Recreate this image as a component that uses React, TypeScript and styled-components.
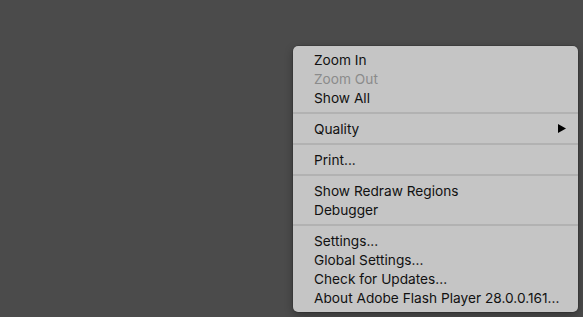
import React from "react";
import styled, { createGlobalStyle } from "styled-components";

const Global = createGlobalStyle`
  html, body { margin: 0; padding: 0; background: #4b4b4b; }
  body { width: 583px; height: 317px; overflow: hidden; }
`;

const Page = styled.div`
  width: 583px;
  height: 317px;
  box-sizing: border-box;
  padding: 46px 0 0 293px;
  background: #4b4b4b;
`;

const Menu = styled.div`
  width: 285px;
  box-sizing: border-box;
  padding: 4px 0 5px;
  background: #c5c5c5;
  border-radius: 5px;
  box-shadow: 0 0 0 0.5px rgba(0, 0, 0, 0.25), 0 3px 8px rgba(0, 0, 0, 0.3);
  display: flex;
  flex-direction: column;
  font-family: "Inter", "Liberation Sans", sans-serif;
  font-size: 13.7px;
`;

const Item = styled.div<{ $disabled?: boolean }>`
  height: 19px;
  display: flex;
  align-items: center;
  justify-content: space-between;
  padding: 0 12px 0 21px;
  color: ${(p) => (p.$disabled ? "#8b8b8b" : "#111111")};
  white-space: nowrap;
`;

const Separator = styled.div`
  height: 12px;
  display: flex;
  align-items: center;
  &::after {
    content: "";
    flex: 1;
    height: 2px;
    background: #b2b2b2;
  }
`;

const Arrow = styled.svg`
  width: 8px;
  height: 9px;
  display: block;
`;

export default function App() {
  return (
    <>
      <Global />
      <Page>
        <Menu>
          <Item>Zoom In</Item>
          <Item $disabled>Zoom Out</Item>
          <Item>Show All</Item>
          <Separator />
          <Item>
            <span>Quality</span>
            <Arrow viewBox="0 0 8 9">
              <path d="M0 0 L8 4.5 L0 9 Z" fill="#000" />
            </Arrow>
          </Item>
          <Separator />
          <Item>Print...</Item>
          <Separator />
          <Item>Show Redraw Regions</Item>
          <Item>Debugger</Item>
          <Separator />
          <Item>Settings...</Item>
          <Item>Global Settings...</Item>
          <Item>Check for Updates...</Item>
          <Item>About Adobe Flash Player 28.0.0.161...</Item>
        </Menu>
      </Page>
    </>
  );
}
